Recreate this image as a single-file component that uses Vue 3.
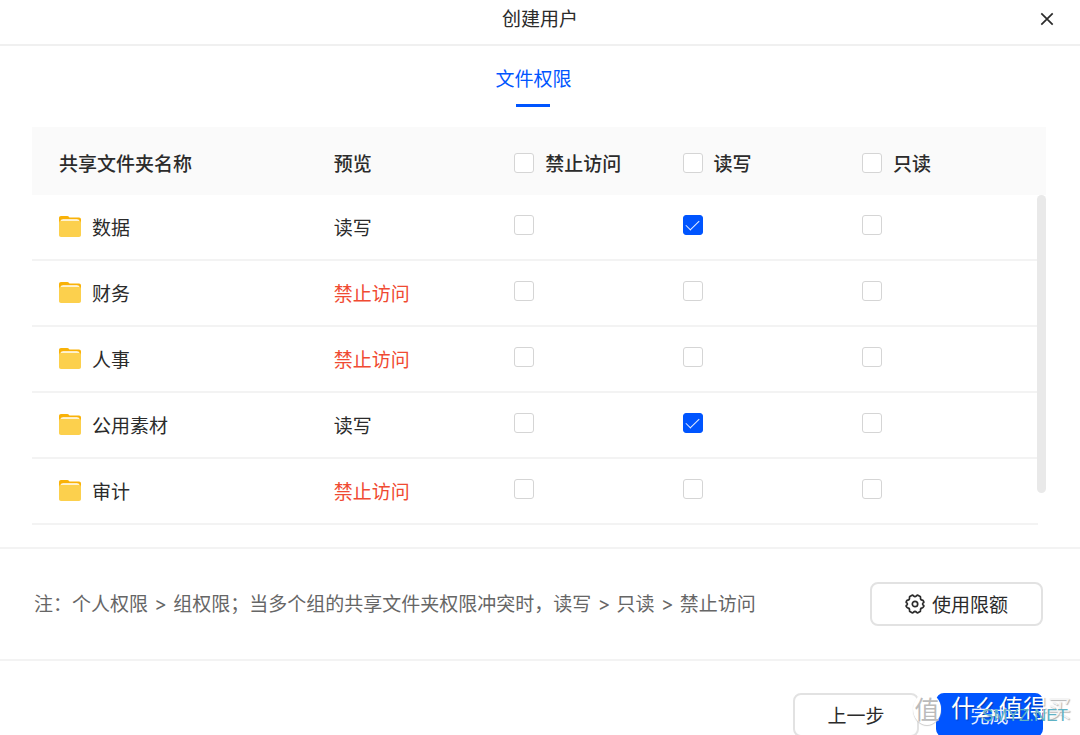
<script setup>
import { ref } from 'vue'

const permissions = [
  { key: 'deny', label: '禁止访问' },
  { key: 'write', label: '读写' },
  { key: 'read', label: '只读' }
]

const folders = ref([
  { name: '数据', deny: false, write: true, read: false },
  { name: '财务', deny: false, write: false, read: false },
  { name: '人事', deny: false, write: false, read: false },
  { name: '公用素材', deny: false, write: true, read: false },
  { name: '审计', deny: false, write: false, read: false }
])

const all = ref({ deny: false, write: false, read: false })

function preview(folder) {
  if (folder.deny) return '禁止访问'
  if (folder.write) return '读写'
  if (folder.read) return '只读'
  return '禁止访问'
}

function toggleAll(key) {
  folders.value.forEach((folder) => {
    folder[key] = all.value[key]
  })
}
</script>

<template>
  <div class="dialog" role="dialog" aria-labelledby="dialog-title">
    <header class="title-bar">
      <h1 id="dialog-title">创建用户</h1>
      <button class="close" type="button" aria-label="关闭">
        <svg viewBox="0 0 14 14" width="14" height="14">
          <path d="M1.3 1.3 12.7 12.7M12.7 1.3 1.3 12.7" fill="none" stroke="#2b2b2b" stroke-width="1.7" />
        </svg>
      </button>
    </header>

    <nav class="tabs">
      <button class="tab" type="button">文件权限</button>
    </nav>

    <main class="table-area">
      <table>
        <colgroup>
          <col class="c-name" /><col class="c-preview" /><col class="c-deny" /><col class="c-write" /><col /><col class="c-gutter" />
        </colgroup>
        <thead>
          <tr>
            <th scope="col">共享文件夹名称</th>
            <th scope="col">预览</th>
            <th v-for="p in permissions" :key="p.key" scope="col">
              <label class="check-label">
                <input v-model="all[p.key]" type="checkbox" @change="toggleAll(p.key)" />
                <span>{{ p.label }}</span>
              </label>
            </th>
            <td class="gutter"></td>
          </tr>
        </thead>
        <tbody>
          <tr v-for="folder in folders" :key="folder.name">
            <td>
              <span class="folder">
                <svg viewBox="0 0 22 21" width="22" height="21" aria-hidden="true">
                  <path d="M2 0h6.2c.8 0 1.2.3 1.7.8l.5.6H20c1.2 0 2 .8 2 2V9H0V2C0 .8.8 0 2 0Z" fill="#f9b208" />
                  <path d="M4.200 3.200h13.600c1.700 0 2.700.8 2.700 2.200V9H1.500V5.400c0-1.400 1-2.200 2.700-2.200Z" fill="#fff" />
                  <path d="M2.400 4.800h17.200c1.500 0 2.400.8 2.400 2V19c0 1.200-.8 2-2 2H2c-1.200 0-2-.8-2-2V6.800c0-1.200.9-2 2.400-2Z" fill="#fcd04d" />
                </svg>
                <span>{{ folder.name }}</span>
              </span>
            </td>
            <td><span class="preview" :class="{ denied: preview(folder) === '禁止访问' }">{{ preview(folder) }}</span></td>
            <td v-for="p in permissions" :key="p.key">
              <label class="check-label cell-check">
                <input v-model="folder[p.key]" type="checkbox" :aria-label="`${folder.name} ${p.label}`" />
              </label>
            </td>
            <td class="gutter"></td>
          </tr>
        </tbody>
      </table>
      <div class="scroll-thumb"></div>
    </main>

    <section class="note-bar">
      <p>注：个人权限<span class="gt"> &gt; </span>组权限；当多个组的共享文件夹权限冲突时，读写<span class="gt"> &gt; </span>只读<span class="gt"> &gt; </span>禁止访问</p>
      <button class="btn quota" type="button">
        <svg viewBox="0 0 20 20" width="20" height="20" aria-hidden="true">
          <path d="M7.100 1.200Q8 1.100 8.500 1.800Q10 3.200 11.500 1.800Q12 1.100 12.900 1.200L15.100 2.400Q15.700 3 15.500 3.800Q15.300 5.900 17.300 6.200Q18.200 6.400 18.500 7.200Q19.500 8.500 18 9Q17.100 10 18 11Q19.500 11.500 18.500 12.800Q18.200 13.600 17.300 13.800Q15.300 14.100 15.500 16.200Q15.700 17 15.100 17.600L12.900 18.800Q12 18.900 11.500 18.200Q10 16.800 8.500 18.200Q8 18.900 7.100 18.800L4.900 17.600Q4.300 17 4.500 16.200Q4.700 14.100 2.700 13.800Q1.800 13.600 1.500 12.800Q.5 11.500 2 11Q2.900 10 2 9Q.5 8.500 1.500 7.200Q1.800 6.400 2.700 6.200Q4.700 5.900 4.500 3.800Q4.300 3 4.900 2.400Z" fill="none" stroke="#2b2b2b" stroke-width="1.7" stroke-linejoin="round" />
          <circle cx="10" cy="10" r="2.700" fill="none" stroke="#2b2b2b" stroke-width="1.7" />
        </svg>
        <span>使用限额</span>
      </button>
    </section>

    <footer class="actions">
      <button class="btn" type="button">上一步</button>
      <div class="finish">
        <button class="btn primary" type="button">完成</button>
        <div class="watermark" aria-hidden="true">
          <span class="seal">值</span>
          <span class="brand">什么值得<span class="faint">买</span></span>
          <span class="site">SMYZ.NET</span>
        </div>
      </div>
    </footer>
  </div>
</template>

<style>
html,
body {
  height: 100%;
  background: #fff;
}

body {
  overflow: hidden;
}
</style>

<style scoped>
.dialog {
  color: #2b2b2b;
  font: 19px/28px "Noto Sans CJK SC", sans-serif;
}

button {
  font: inherit;
  color: inherit;
  cursor: pointer;
}

.title-bar {
  display: flex;
  align-items: center;
  justify-content: center;
  position: relative;
  height: 46px;
  padding-bottom: 8px;
  box-sizing: border-box;
  border-bottom: 2px solid #f0f0f0;
}

h1 {
  margin: 0;
  font-size: 19px;
  font-weight: 400;
}

.close {
  position: absolute;
  right: 20px;
  top: 6px;
  display: flex;
  align-items: center;
  justify-content: center;
  width: 26px;
  height: 26px;
  padding: 0;
  border: 0;
  background: none;
}

.tabs {
  display: flex;
  justify-content: center;
  padding: 18px 13px 20px 0;
}

.tab {
  display: flex;
  flex-direction: column;
  align-items: center;
  gap: 12px;
  padding: 0;
  border: 0;
  background: none;
  color: #0055ff;
}

.tab::after {
  content: "";
  width: 34px;
  height: 3px;
  background: #0055ff;
}

.table-area {
  position: relative;
  margin: 0 34px 0 32px;
}

table {
  width: 100%;
  table-layout: fixed;
  border-collapse: separate;
  border-spacing: 0;
}

.c-name { width: 27.1%; }
.c-preview { width: 17.8%; }
.c-deny { width: 16.6%; }
.c-write { width: 17.7%; }
.c-gutter { width: 8px; }

th,
td {
  height: 66px;
  box-sizing: border-box;
  padding: 0 0 0 27px;
  text-align: left;
  vertical-align: middle;
}

thead th,
thead td {
  height: 68px;
  padding-top: 3px;
  background: #fafafa;
  font-weight: 500;
}

tbody td {
  border-bottom: 2px solid #f3f3f3;
}

td.gutter {
  padding: 0;
  border-bottom: 0;
}

.folder {
  display: flex;
  align-items: center;
  gap: 11px;
  padding-bottom: 1px;
}

.preview {
  display: block;
}

.denied {
  color: #f04a32;
}

.check-label {
  display: flex;
  align-items: center;
  gap: 11px;
}

.cell-check {
  padding-bottom: 4px;
}

input[type="checkbox"] {
  appearance: none;
  display: grid;
  place-items: center;
  flex: none;
  width: 20px;
  height: 20px;
  margin: 0;
  border: 1px solid #d5d5d5;
  border-radius: 3px;
  background: #fff;
}

input[type="checkbox"]:checked {
  border-color: #0055ff;
  background: #0055ff;
}

input[type="checkbox"]:checked::after {
  content: "";
  width: 13px;
  height: 7px;
  margin-bottom: 4px;
  border: solid #e6eeff;
  border-width: 0 0 1px 1px;
  box-sizing: border-box;
  transform: rotate(-45deg);
}

.scroll-thumb {
  position: absolute;
  top: 68px;
  right: 0;
  width: 9px;
  height: 298px;
  border-radius: 5px;
  background: #e9e9e9;
}

.note-bar {
  display: flex;
  align-items: center;
  justify-content: space-between;
  margin-top: 22px;
  padding: 33px 37px 33px 34px;
  border-top: 2px solid #f3f3f3;
  border-bottom: 2px solid #f3f3f3;
}

.note-bar p {
  margin: 0;
  color: #666;
}

.gt {
  margin: 0 1px;
  font-family: Inter, sans-serif;
}

.btn {
  display: flex;
  align-items: center;
  justify-content: center;
  gap: 7px;
  width: 126px;
  height: 44px;
  padding: 0;
  box-sizing: border-box;
  border: 2px solid #e2e2e2;
  border-radius: 8px;
  background: #fff;
}

.quota {
  width: 173px;
}

.primary {
  width: 107px;
  border-color: #0055ff;
  background: #0055ff;
  color: #e6eeff;
}

.actions {
  display: flex;
  justify-content: flex-end;
  gap: 17px;
  padding: 32px 37px 0;
}

.finish {
  position: relative;
}

.watermark {
  position: absolute;
  top: 0;
  left: -23px;
  display: flex;
  align-items: flex-start;
  gap: 10px;
  white-space: nowrap;
  pointer-events: none;
}

.seal {
  width: 28px;
  height: 32px;
  border-radius: 50%;
  background: #fff;
  color: #bbb;
  box-shadow: 0 1px 1px #ccc;
  font-size: 25px;
  line-height: 30px;
  text-align: center;
}

.brand {
  color: #fff;
  font-size: 24px;
  line-height: 28px;
  text-shadow: 1px 1px 1px rgba(0, 0, 0, 0.3);
}

.faint {
  color: #f4f4f4;
}

.site {
  position: absolute;
  right: 3px;
  top: 13px;
  color: #5fb2c4;
  font: 17px/20px "Liberation Sans", Arial, sans-serif;
}
</style>
